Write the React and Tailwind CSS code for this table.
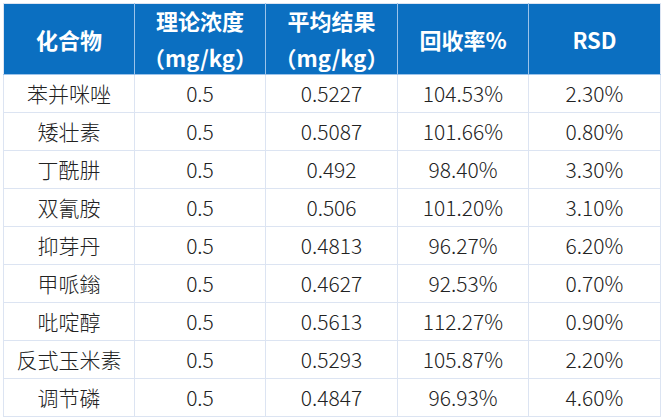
const rows = [
  ['苯并咪唑', '0.5', '0.5227', '104.53%', '2.30%'],
  ['矮壮素', '0.5', '0.5087', '101.66%', '0.80%'],
  ['丁酰肼', '0.5', '0.492', '98.40%', '3.30%'],
  ['双氰胺', '0.5', '0.506', '101.20%', '3.10%'],
  ['抑芽丹', '0.5', '0.4813', '96.27%', '6.20%'],
  ['甲哌鎓', '0.5', '0.4627', '92.53%', '0.70%'],
  ['吡啶醇', '0.5', '0.5613', '112.27%', '0.90%'],
  ['反式玉米素', '0.5', '0.5293', '105.87%', '2.20%'],
  ['调节磷', '0.5', '0.4847', '96.93%', '4.60%'],
]

function Head({ children, className = '' }) {
  return (
    <th className={`border border-[#9cc3ea] border-t-[#dce4f2] p-0 align-middle ${className}`}>
      <div className="h-[70px] flex flex-col items-center justify-center leading-[37px]">
        {children}
      </div>
    </th>
  )
}

export default function App() {
  return (
    <div
      className="w-[663px] h-[420px] bg-white p-[3px]"
      style={{ fontFamily: '"Noto Sans CJK SC", "Noto Sans", sans-serif' }}
    >
      <table className="table-fixed border-collapse w-[657px]">
        <colgroup>
          <col className="w-[131px]" />
          <col className="w-[131px]" />
          <col className="w-[132px]" />
          <col className="w-[131px]" />
          <col className="w-[132px]" />
        </colgroup>
        <thead>
          <tr className="bg-[#0b6fc1] text-white font-bold text-[22px]">
            <Head className="border-l-[#dce4f2]">
              <span>化合物</span>
            </Head>
            <Head>
              <span>理论浓度</span>
              <span>（mg/kg）</span>
            </Head>
            <Head>
              <span>平均结果</span>
              <span>（mg/kg）</span>
            </Head>
            <Head>
              <span>回收率%</span>
            </Head>
            <Head className="border-r-[#dce4f2]">
              <span>RSD</span>
            </Head>
          </tr>
        </thead>
        <tbody className="text-[#222222] text-[21px] font-light">
          {rows.map((r) => (
            <tr key={r[0]}>
              {r.map((c, i) => (
                <td key={i} className="border border-[#dce4f2] text-center p-0 h-[38px] leading-[35px]">
                  {c}
                </td>
              ))}
            </tr>
          ))}
        </tbody>
      </table>
    </div>
  )
}
